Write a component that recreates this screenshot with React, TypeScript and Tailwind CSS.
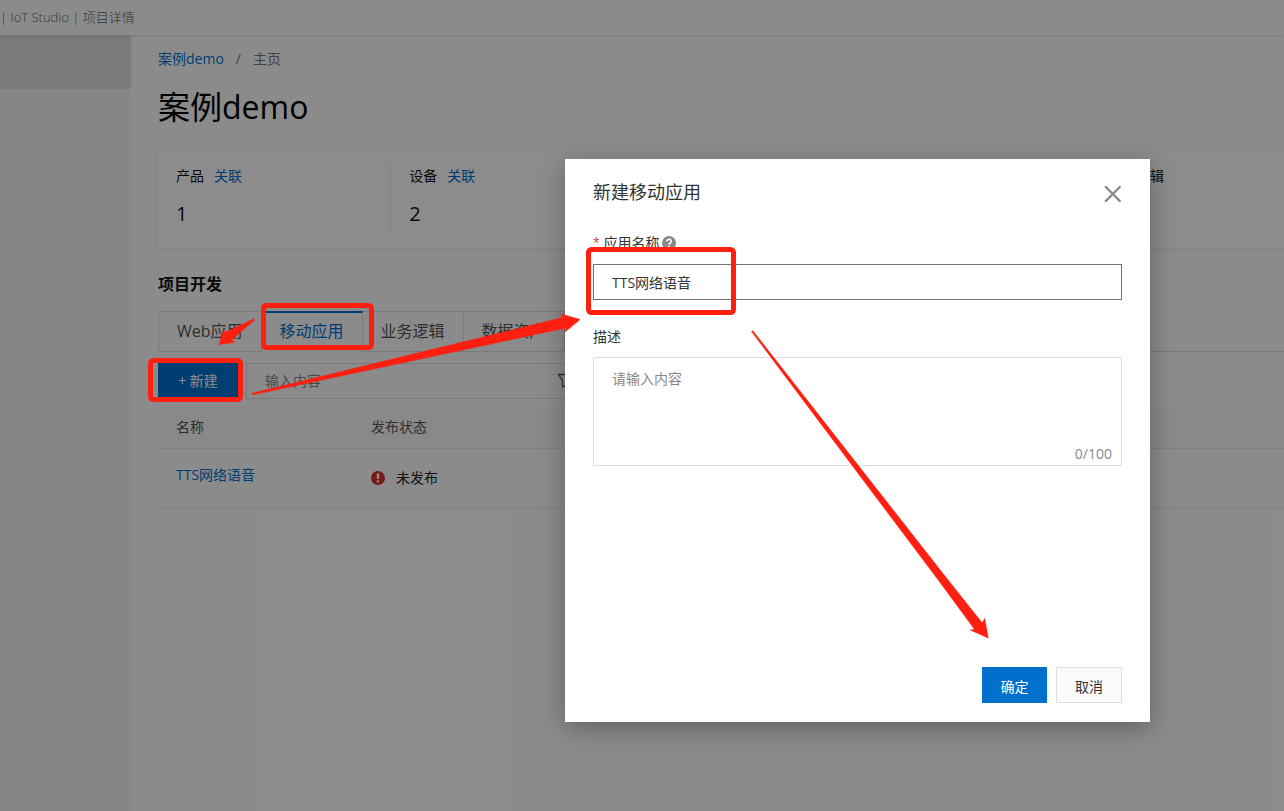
import React from "react";

const RED = "#ff1f10";

function StatCell({ label, value, divided }: { label: string; value: string; divided?: boolean }) {
  return (
    <div className={"flex-1 pl-[18px] text-[#111] " + (divided ? "border-l border-[#ececec]" : "")}>
      <div className="flex gap-[10px] pt-px text-sm leading-5">
        <span>{label}</span>
        <a href="#" className="text-[#0070cc]">关联</a>
      </div>
      <div className="pt-3 text-xl leading-8">{value}</div>
    </div>
  );
}

function Tab({ label, active }: { label: string; active?: boolean }) {
  return (
    <button
      type="button"
      role="tab"
      aria-selected={!!active}
      className={
        "h-[41px] border-r border-[#dedede] px-[18px] text-base " +
        (active ? "border-t-2 border-t-[#0070cc] pb-[3px] text-[#0070cc]" : "border-t border-b pb-px text-[#555]")
      }
    >
      {label}
    </button>
  );
}

function PageContent() {
  return (
    <main className="min-w-0 flex-1 pl-[27px]">
      <nav className="flex gap-3 pt-3 text-sm leading-6">
        <a href="#" className="text-[#0070cc]">案例demo</a>
        <span className="text-[#777]">/</span>
        <span className="text-[#777]">主页</span>
      </nav>
      <h1 className="mt-3 text-[32px] leading-12 text-black">案例demo</h1>
      <section className="mt-[17px] flex bg-white pt-[17px] pb-[18px] shadow-[0_1px_4px_rgba(0,0,0,0.1)]">
        <StatCell label="产品" value="1" />
        <StatCell label="设备" value="2" divided />
        <div className="flex-1 border-l border-[#ececec] pl-[18px]" />
        <div className="flex-1 border-l border-[#ececec] pl-[18px]" />
        <div className="w-[194px] shrink-0 pt-px pl-[18px] text-sm leading-5 text-[#111]">业务逻辑</div>
      </section>
      <h2 className="mt-6 text-base leading-6 font-bold text-[#111]">项目开发</h2>
      <div role="tablist" className="mt-[15px] flex">
        <div className="flex border-l border-[#dedede]">
          <Tab label="Web应用" />
          <Tab label="移动应用" active />
          <Tab label="业务逻辑" />
          <Tab label="数据资产" />
        </div>
        <div className="flex-1 border-b border-[#dedede]" />
      </div>
      <div className="mt-[11px] flex gap-2">
        <button type="button" className="h-[35px] w-20 bg-[#0070cc] text-sm text-white">+ 新建</button>
        <div className="flex h-9 w-[346px] items-center border border-[#dedede] px-[18px]">
          <input aria-label="输入内容" placeholder="输入内容" className="min-w-0 flex-1 text-sm outline-none placeholder:text-[#888]" />
          <svg className="size-4" viewBox="0 0 16 16" fill="none" stroke="#555" strokeWidth="1.3" aria-hidden="true">
            <path d="M1.500 1.500h13l-4 6v6h-5v-6z" />
          </svg>
        </div>
      </div>
      <table className="mt-[7px] w-full text-left text-sm">
        <thead className="bg-[#fafafa] text-[#555]">
          <tr className="h-[42px] border-b border-[#e8e8e8]">
            <th className="w-[195px] pl-[18px] font-normal">名称</th>
            <th className="pl-[18px] font-normal">发布状态</th>
          </tr>
        </thead>
        <tbody>
          <tr className="h-[59px] border-b border-[#e8e8e8]">
            <td className="pb-[6px] pl-[18px]"><a href="#" className="text-[#0070cc]">TTS网络语音</a></td>
            <td className="pl-[18px] text-[#222]">
              <span className="flex items-center gap-[11px]">
                <svg className="size-[14px]" viewBox="0 0 14 14" aria-hidden="true">
                  <circle cx="7" cy="7" r="7" fill="#d93026" />
                  <path d="M5.800 2.400h2.400v5.600H5.800zM5.800 9.200h2.400v2.200H5.800z" fill="#fff" />
                </svg>
                未发布
              </span>
            </td>
          </tr>
        </tbody>
      </table>
    </main>
  );
}

function CreateDialog() {
  return (
    <div role="dialog" aria-labelledby="dialog-title" className="flex min-h-[563px] w-[585px] flex-col bg-white px-7 pb-[19px] text-sm text-[#333] shadow-[0_6px_24px_rgba(0,0,0,0.3)]">
      <div className="flex items-center justify-between pt-[19px]">
        <h2 id="dialog-title" className="text-lg leading-7">新建移动应用</h2>
        <button type="button" aria-label="关闭" className="pt-1">
          <svg className="size-[18px]" viewBox="0 0 18 18" stroke="#888" strokeWidth="2.400" strokeLinecap="round" aria-hidden="true">
            <path d="M1.800 2l14 14M15.800 2L1.800 16" />
          </svg>
        </button>
      </div>
      <div className="flex items-center pt-[25px] leading-6">
        <label htmlFor="app-name" className="flex gap-1"><span className="text-xs leading-6 text-[#d93026]">*</span>应用名称</label>
        <svg className="ml-0.5 size-[14px]" viewBox="0 0 14 14" aria-hidden="true">
          <circle cx="7" cy="7" r="7" fill="#888" />
          <path d="M4.800 5.400a2.200 2.200 0 1 1 3.300 1.900c-.8.5-1.100.7-1.100 1.400" fill="none" stroke="#fff" strokeWidth="1.700" />
          <circle cx="7" cy="10.700" r="1" fill="#fff" />
        </svg>
      </div>
      <input id="app-name" defaultValue="TTS网络语音" className="mt-[9px] h-9 border border-[#737373] px-[18px] outline-none" />
      <label htmlFor="app-desc" className="pt-[25px] leading-6">描述</label>
      <div className="mt-2 flex h-[109px] flex-col border border-[#dedede]">
        <textarea id="app-desc" placeholder="请输入内容" className="min-h-0 flex-1 resize-none px-[18px] pt-[11px] outline-none placeholder:text-[#888]" />
        <span className="pr-[9px] pb-px text-right leading-5 text-[#888]">0/100</span>
      </div>
      <div className="mt-auto flex justify-end gap-[9px]">
        <button type="button" className="h-9 w-[65px] bg-[#0070cc] pt-1 text-white">确定</button>
        <button type="button" className="h-9 w-[66px] border border-[#dedede] bg-[#fafafa] pt-1">取消</button>
      </div>
    </div>
  );
}

function Annotations() {
  return (
    <svg className="pointer-events-none absolute top-0 left-0" width="1284" height="811" viewBox="0 0 1284 811" fill="none" aria-hidden="true">
      <g stroke={RED} strokeWidth="5">
        <rect x="263.5" y="305.5" width="108" height="42" rx="3" />
        <rect x="150.5" y="360.5" width="90" height="39" rx="3" />
        <rect x="588.5" y="249.5" width="145" height="63" rx="3" />
      </g>
      <g fill={RED} stroke={RED} strokeWidth="0.6" strokeLinejoin="round">
        <path d="M254 318.700L225.500 332.300 223.500 330 219 344.500 234.700 342.300 231.700 339.700 254.500 320z" />
        <path d="M252.200 393.300L500 333 563 317.600 561 314 580 319.500 565 332 565.700 328 500 342 252.500 394.800z" />
        <path d="M752.800 330.800L948 580 982.300 623 984.700 618.500 988.200 638 970.300 630 974.700 629.500 939 581 751.600 331.600z" />
      </g>
    </svg>
  );
}

export default function App() {
  return (
    <div className="relative min-h-screen overflow-hidden bg-[#fefefe] font-['Open_Sans','Noto_Sans_CJK_SC',sans-serif]">
      <header className="relative h-[35px] pt-[3px] text-[13px] leading-7 font-light text-[#666] shadow-[0_1px_4px_rgba(0,0,0,0.1)]">| IoT Studio | 项目详情</header>
      <div className="flex min-h-[calc(100vh-35px)]">
        <aside className="w-[131px] shrink-0 bg-[#f5f5f5]"><div className="h-[54px] bg-[#dedede]" /></aside>
        <PageContent />
      </div>
      <div className="absolute inset-0 flex items-start justify-end bg-black/45 pt-[159px] pr-[134px]">
        <CreateDialog />
      </div>
      <Annotations />
    </div>
  );
}
